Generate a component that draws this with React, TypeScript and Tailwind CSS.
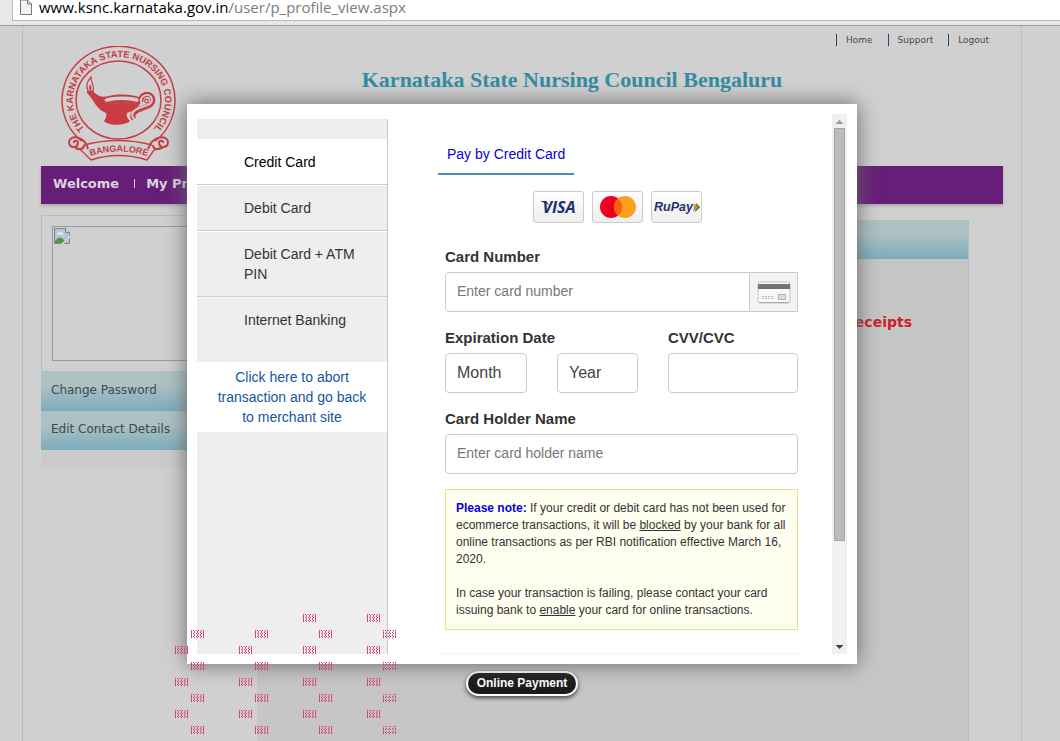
import React from "react";

const sans = "font-['Liberation_Sans',Arial,sans-serif]";
const verdana = "font-['DejaVu_Sans',Verdana,sans-serif]";

function CouncilLogo() {
  return (
    <svg
      viewBox="0 0 116 118"
      className="h-[118px] w-[116px]"
      role="img"
      aria-label="Council emblem"
      fill="none"
      stroke="#c83c44"
    >
      <defs>
        <path id="ring" d="M27 86 A46 43 0 1 1 89 86" />
        <path id="banner" d="M24 112 Q57 99 92 112" />
      </defs>
      <path d="M26 99 A56.500 54 0 1 1 89 99" strokeWidth="1.5" />
      <ellipse cx="57.500" cy="54" rx="42.500" ry="39" strokeWidth="1.5" />
      <text fill="#c83c44" stroke="none" fontSize="9.4" fontWeight="700" fontFamily="Liberation Sans, Arial, sans-serif">
        <textPath href="#ring" startOffset="50%" textAnchor="middle">
          THE KARNATAKA STATE NURSING COUNCIL
        </textPath>
      </text>
      <path
        d="M20 95 Q57 106 94 95 L102 103 L86 114 Q57 104 30 114 L14 103 Z"
        fill="#d0d0d0"
        stroke="none"
      />
      <path d="M23 99 Q57 90 91 99 M14 102 L20 104 L30 114 Q57 105 86 114 L93 104 L102 102" strokeWidth="1.4" />
      <text fill="#c83c44" stroke="none" fontSize="9" fontWeight="700" fontFamily="Liberation Sans, Arial, sans-serif">
        <textPath href="#banner" startOffset="50%" textAnchor="middle">
          BANGALORE
        </textPath>
      </text>
      <path
        d="M27 103 C24 90 9 88 8 96 C8 102 16 103 17 97 C17 94 12 94 13 97 M15 102 C19 104 23 103 23 99"
        strokeWidth="2"
      />
      <path
        d="M87 103 C91 90 106 88 107 96 C107 102 99 103 98 97 C98 94 103 94 102 97 M100 102 C96 104 92 103 92 99"
        strokeWidth="2"
      />
      <path d="M30 31 C24 38 26 42 27 45 L32 45 C34 41 30 37 30 31 Z" strokeWidth="1.2" />
      <path d="M29.500 38 C27 42 28 44 30 45 C31 42 30 40 29.500 38 Z" fill="#c83c44" stroke="none" />
      <path
        d="M26 45 L32 45 C36 50 41 52 48 50 C60 47 74 49 80 52 C81 60 73 65 66 67 C65 70 66 72 69 75 C64 80 47 80 43 75 C45 72 46 69 45 67 C35 63 33 54 26 47 Z"
        fill="#c83c44"
        stroke="none"
      />
      <ellipse cx="61" cy="54" rx="17.500" ry="3.600" fill="#d0d0d0" stroke="none" />
      <path d="M45 56 Q60 52 77 56 Q62 60 45 56Z" fill="#c83c44" stroke="none" />
      <path
        d="M80 56 C79 48 88 46 91 51 C94 58 88 60 82 62 C75 64 69 68 73 73"
        strokeWidth="5"
      />
      <path
        d="M80 56 C79 49 88 47 90 51 C93 57 88 59 81 61 C74 63 68 67 73 73"
        stroke="#d0d0d0"
        strokeWidth="2"
      />
      <circle cx="85.500" cy="55" r="1.800" strokeWidth="1.2" />
    </svg>
  );
}

function BrokenImage() {
  return (
    <svg viewBox="0 0 16 16" className="h-4 w-4" aria-hidden="true">
      <path d="M.5.5 H11.500 L15.500 4.500 V15.500 H.5 Z" fill="#b3c5dd" stroke="#858585" />
      <path d="M11.500.5 V4.500 H15.500" fill="#d5d5d5" stroke="#858585" />
      <path d="M3 6 Q3 4 5 4 Q7 2 8.500 5 Q10 5 10 7 H3Z" fill="#e2e2e2" />
      <path d="M1 15 V13 Q6 6 11 13 L13 15Z" fill="#4c9a3b" />
      <path d="M7 16 L16 7 V10 L10 16Z" fill="#d0d0d0" />
    </svg>
  );
}

function VisaLogo() {
  return (
    <svg viewBox="0 0 40 20" className="h-5 w-10" role="img" aria-label="Visa">
      <path d="M1 4 H7 L10 8 L6 6 Z" fill="#20306f" />
      <text x="20" y="16" textAnchor="middle" fontSize="16" fontWeight="700" fontStyle="italic" fontFamily="Open Sans, sans-serif" fill="#20306f">
        VISA
      </text>
    </svg>
  );
}

function MastercardLogo() {
  return (
    <svg viewBox="0 0 36 22" className="h-[22px] w-9" role="img" aria-label="Mastercard">
      <circle cx="11" cy="11" r="11" fill="#eb0022" />
      <circle cx="25" cy="11" r="11" fill="#f9a01f" />
      <path d="M18 2.500 A11 11 0 0 1 18 19.500 A11 11 0 0 1 18 2.500" fill="#fc6010" />
    </svg>
  );
}

function RupayLogo() {
  return (
    <svg viewBox="0 0 46 16" className="h-4 w-[46px]" role="img" aria-label="RuPay">
      <text x="0" y="12" fontSize="12.5" fontWeight="700" fontStyle="italic" fontFamily="Liberation Sans, Arial, sans-serif" fill="#27306e">
        RuPay
      </text>
      <path d="M42.500 4 L46 8.500 L41 13 Z" fill="#15894a" />
      <path d="M40.500 4 L44 8.500 L39 13 Z" fill="#f07f2a" />
    </svg>
  );
}

function CardGlyph() {
  return (
    <svg viewBox="0 0 34 24" className="h-6 w-[34px]" aria-hidden="true">
      <rect x="1" y="2" width="32" height="21" rx="2" fill="#f8f8f8" stroke="#c4c4c4" />
      <path d="M2 22.500 H32" stroke="#aaa" />
      <rect x="1" y="4" width="32" height="5" fill="#707070" />
      <path d="M1 5.500 H33" stroke="#888" strokeDasharray="2 2" />
      <path d="M5 16.500 H17 M5 18.500 H17" stroke="#bbb" strokeDasharray="2 1" />
      <rect x="21.500" y="14.500" width="7" height="5" fill="#ddd" stroke="#b5b5b5" />
    </svg>
  );
}

const specks: [number, number][] = [
  [303, 614], [367, 614],
  [191, 630], [255, 630], [319, 630], [383, 630],
  [175, 646], [239, 646], [303, 646], [367, 646],
  [191, 662], [255, 662], [319, 662], [383, 662],
  [175, 678], [239, 678], [303, 678], [367, 678],
  [191, 694], [255, 694], [319, 694], [383, 694],
  [175, 710], [239, 710], [303, 710], [367, 710],
  [191, 726], [255, 726], [319, 726], [383, 726],
];

function Specks() {
  return (
    <svg className="pointer-events-none absolute top-0 left-0 z-20 h-[741px] w-[420px]" aria-hidden="true">
      {specks.map(([x, y]) => (
        <g key={`${x}-${y}`} fill="none" strokeWidth="1">
          <path d={`M${x} ${y + 0.5} h15 M${x} ${y + 3.5} h15 M${x} ${y + 6.5} h15`} stroke="#d8326c" strokeDasharray="1 1 1 2" />
          <path d={`M${x} ${y + 1.5} h15 M${x} ${y + 4.5} h15`} stroke={x > 370 ? "#d6c03e" : "#e46a5c"} strokeDasharray="1 2" />
          <path d={`M${x} ${y + 2.5} h15 M${x} ${y + 5.5} h15 M${x} ${y + 7.5} h15`} stroke="#c63fa0" strokeDasharray="1 2" />
        </g>
      ))}
    </svg>
  );
}

function AddressBar() {
  return (
    <header className="flex h-[26px] items-start border-b border-[#9a9a9a] bg-[#e8e8e8] pl-3">
      <div className="flex h-[21px] flex-1 items-start gap-[7px] border-b border-l border-[#b8b8b8] bg-white pl-[7px]">
        <svg viewBox="0 0 12 16" className="h-4 w-3 shrink-0" fill="#f4f4f4" stroke="#777" aria-hidden="true">
          <path d="M.5 0 V14.500 H11.500 V4 L7.500 0 Z M7.500 0 V4 H11.500" />
        </svg>
        <div className="font-['Open_Sans','Noto_Sans',sans-serif] text-[15px] leading-[14px] text-[#7c7c7c]">
          <span className="text-black">www.ksnc.karnataka.gov.in</span>/user/p_profile_view.aspx
        </div>
      </div>
    </header>
  );
}

const barGradient = "bg-linear-to-b from-[#adc2c3] from-35% to-[#7aacbd]";

function ProfilePage() {
  return (
    <div className={`flex flex-1 flex-col pr-4 ${verdana}`}>
      <div className="mx-auto flex w-full max-w-[1000px] flex-1 flex-col border-x border-[#bdbdbd] px-[18px]">
        <div className="flex h-[140px]">
          <div className="w-[140px] pt-5 pl-5">
            <CouncilLogo />
          </div>
          <div className="flex-1">
            <nav className="flex justify-end gap-[15px] pt-2 pr-[14px] text-[9px] leading-3 text-[#484848]">
              <a href="#home" className="border-l border-[#284472] pl-[9px]">Home</a>
              <a href="#support" className="border-l border-[#284472] pl-[9px]">Support</a>
              <a href="#logout" className="border-l border-[#284472] pl-[9px]">Logout</a>
            </nav>
            <h1 className="pt-[22px] pr-10 text-center font-['Liberation_Serif','Times_New_Roman',serif] text-[22px] leading-6 font-bold text-[#338da2]">
              Karnataka State Nursing Council Bengaluru
            </h1>
          </div>
        </div>
        <nav className="flex h-[38px] items-center bg-[#671e78] pb-[3px] pl-3 text-[13px] leading-4 font-bold text-[#dcd3df] shadow-[0_2px_3px_#aaa]">
          <a href="#welcome">Welcome</a>
          <span className="mr-[11px] ml-[15px] h-[9px] w-px bg-[#dcd3df]" />
          <a href="#profile">My Profile</a>
        </nav>
        <div className="flex flex-1 items-stretch gap-3">
          <aside className="w-[204px] pt-[11px]">
            <div className="border border-b-0 border-[#bcbcbc] p-[10px]">
              <div className="h-[135px] border border-[#999] p-px">
                <BrokenImage />
              </div>
            </div>
            <div className="bg-[#cbcbcb] pb-[18px] text-[12px] leading-4 text-[#404a4e]">
              <a href="#password" className={`flex h-10 items-center px-[10px] pb-[3px] ${barGradient}`}>Change Password</a>
              <a href="#contact" className={`flex h-[39px] items-center px-[10px] pb-[3px] ${barGradient}`}>Edit Contact Details</a>
            </div>
          </aside>
          <main className="mt-4 mr-[34px] flex flex-1 flex-col border-r border-[#b9b9b9] bg-[#c6c6c6]">
            <div className={`h-[39px] ${barGradient}`} />
            <h2 className="pt-[54px] pr-14 text-right text-[14px] leading-[18px] font-bold text-[#cb2027]">Receipts</h2>
            <div className="flex justify-center pt-[340px] pr-[181px]">
              <button className={`h-[25px] rounded-full border-2 border-white bg-[#1c1c1c] px-[9px] pb-px text-[12px] leading-4 font-bold text-white shadow-[0_2px_4px_#444] ${sans}`}>
                Online Payment
              </button>
            </div>
          </main>
        </div>
      </div>
    </div>
  );
}

const methods = ["Credit Card", "Debit Card", "Debit Card + ATM PIN", "Internet Banking"];

function MethodMenu() {
  return (
    <aside className="mt-[5px] w-[191px] shrink-0 border-r border-[#c9c9c9] bg-[#eee] text-[14px] leading-5 text-[#333]">
      <ul className="py-5">
        {methods.map((name, i) => (
          <li key={name} className={i === 3 ? "" : "border-b border-[#d0d0d0]"}>
            <button
              className={`block w-full border-t pt-3 pr-5 pb-3 pl-[47px] text-left ${i === 3 ? "border-[#f6f6f6]" : "border-white"} ${i === 0 ? "bg-white text-black" : ""}`}
            >
              {name}
            </button>
          </li>
        ))}
      </ul>
      <a href="#abort" className="block bg-white px-5 py-[5px] text-center text-[#1456a0]">
        Click here to abort transaction and go back to merchant site
      </a>
    </aside>
  );
}

const control = "h-10 rounded border border-[#ccc] bg-white px-[11px]";
const field = `${control} w-full pb-[3px] placeholder:text-[#777]`;
const logoBox = "flex h-8 w-[51px] items-center justify-center rounded-[3px] border border-[#ccc] bg-linear-to-b from-white to-[#eee]";
const labelText = "mb-[5px] block text-[15px] leading-5 font-bold text-[#333]";

function CardForm() {
  return (
    <div className="flex-1 pt-6 pr-[27px] pl-[50px]">
      <div className="flex h-[516px] flex-col">
        <a href="#credit" className="self-start border-b-2 border-[#4a8db5] px-[9px] pt-[6px] pb-[9px] text-[14px] leading-5 text-[#0a02d4]">
          Pay by Credit Card
        </a>
        <div className="flex justify-center gap-2 pt-4 pr-2">
          <span className={logoBox}><VisaLogo /></span>
          <span className={logoBox}><MastercardLogo /></span>
          <span className={logoBox}><RupayLogo /></span>
        </div>
        <form className="flex flex-col gap-4 px-[7px] pt-6 text-[14px] text-[#444]">
          <div>
            <label htmlFor="number" className={labelText}>Card Number</label>
            <div className="flex">
              <input id="number" placeholder="Enter card number" className={`${field} rounded-r-none`} />
              <span className="flex h-10 w-12 shrink-0 items-center justify-center border border-l-0 border-[#ccc] bg-[#f3f3f3]">
                <CardGlyph />
              </span>
            </div>
          </div>
          <div className="flex gap-[30px]">
            <div>
              <label htmlFor="month" className={labelText}>Expiration Date</label>
              <div className="flex gap-[30px]">
                <select id="month" className={`${control} w-[82px] appearance-none pb-px text-[16px]`}>
                  <option>Month</option>
                </select>
                <select aria-label="Year" className={`${control} w-[81px] appearance-none pb-px text-[16px]`}>
                  <option>Year</option>
                </select>
              </div>
            </div>
            <div className="flex-1">
              <label htmlFor="cvv" className={labelText}>CVV/CVC</label>
              <input id="cvv" className={field} />
            </div>
          </div>
          <div>
            <label htmlFor="holder" className={labelText}>Card Holder Name</label>
            <input id="holder" placeholder="Enter card holder name" className={field} />
          </div>
        </form>
        <div className="mx-[7px] mt-[15px] border border-[#eedf8c] bg-[#fffff0] p-[10px] text-[12px] leading-[17px] text-[#333]">
          <p>
            <b className="text-[#0a02d4]">Please note:</b> If your credit or debit card has not been used for ecommerce
            transactions, it will be <u>blocked</u> by your bank for all online transactions as per RBI notification
            effective March 16, 2020.
          </p>
          <p className="pt-[17px]">
            In case your transaction is failing, please contact your card issuing bank to <u>enable</u> your card for
            online transactions.
          </p>
        </div>
        <div className="mt-auto border-b border-[#f5f5f5]" />
      </div>
    </div>
  );
}

function ScrollTrack() {
  return (
    <div className="flex w-[15px] shrink-0 flex-col items-center bg-[#f0f0f0]" aria-hidden="true">
      <svg viewBox="0 0 15 14" className="h-[14px] w-[15px]"><path d="M3.500 10 L7.500 6 L11.500 10Z" fill="#999" /></svg>
      <div className="h-[413px] w-[11px] border border-[#a5a5a5] bg-[#bbb]" />
      <svg viewBox="0 0 15 14" className="mt-auto h-[14px] w-[15px]"><path d="M3.500 5 H11.500 L7.500 9Z" fill="#444" /></svg>
    </div>
  );
}

function PaymentDialog() {
  return (
    <div className={`absolute inset-x-0 top-[104px] z-10 flex justify-center pr-4 ${sans}`}>
      <section role="dialog" aria-label="Payment" className="flex w-full max-w-[670px] bg-white p-[10px] shadow-[0_0_20px_#666]">
        <MethodMenu />
        <CardForm />
        <ScrollTrack />
      </section>
    </div>
  );
}

export default function App() {
  return (
    <div className="relative flex min-h-screen flex-col bg-[#d0d0d0]">
      <AddressBar />
      <ProfilePage />
      <PaymentDialog />
      <Specks />
    </div>
  );
}
